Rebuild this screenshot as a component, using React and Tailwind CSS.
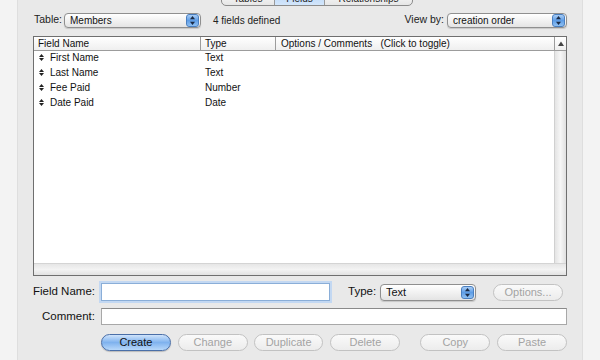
import React from "react";

const font = { fontFamily: '"Liberation Sans", Arial, sans-serif' };

function Arrows() {
  return (
    <div className="w-[13px] h-[13px] rounded-[3px] bg-gradient-to-b from-[#a9cdf5] via-[#5e9de6] to-[#8fc0f2] border border-[#4a7fc0] flex items-center justify-center">
      <svg width="5" height="9" viewBox="0 0 5 9">
        <polygon points="2.5,0 5,3.2 0,3.2" fill="#1a2a44" />
        <polygon points="2.5,9 5,5.8 0,5.8" fill="#1a2a44" />
      </svg>
    </div>
  );
}

function Select({ label, className }) {
  return (
    <div className={"rounded-[4px] border border-[#8f8f8f] bg-gradient-to-b from-[#ffffff] to-[#e4e4e4] flex items-center justify-between pl-[5px] pr-[1px] text-[#111] shadow-[0_1px_1px_rgba(0,0,0,0.15)] " + className}>
      <span>{label}</span>
      <Arrows />
    </div>
  );
}

function Bullet() {
  return (
    <svg width="5" height="7" viewBox="0 0 5 7" className="mr-[6px]">
      <polygon points="2.5,0 5,3 0,3" fill="#222" />
      <polygon points="2.5,7 5,4 0,4" fill="#222" />
    </svg>
  );
}

function Btn({ label, primary, className }) {
  return primary ? (
    <div className={"h-[17px] rounded-full border border-[#4a6fa8] bg-gradient-to-b from-[#cfe3fb] via-[#7fb2ee] to-[#b8d8fa] flex items-center justify-center text-[11px] text-[#111] shadow-[0_1px_1px_rgba(0,0,0,0.2)] " + className}>
      {label}
    </div>
  ) : (
    <div className={"h-[17px] rounded-full border border-[#c2c2c2] bg-gradient-to-b from-[#fafafa] to-[#ececec] flex items-center justify-center text-[11px] text-[#a3a3a3] " + className}>
      {label}
    </div>
  );
}

const rows = [
  ["First Name", "Text"],
  ["Last Name", "Text"],
  ["Fee Paid", "Number"],
  ["Date Paid", "Date"],
];

export default function App() {
  return (
    <div style={font} className="w-[600px] h-[360px] overflow-hidden bg-[#f3f3f3] flex">
      <div className="ml-[17px] w-[566px] h-[360px] bg-[#e9e9e9] border-l border-r border-[#dedede] flex flex-col pl-[15px] pr-[15px]">
        {/* tabs */}
        <div className="h-[16px] mt-[-10px] flex ml-[188px] w-[192px] rounded-[5px] border border-[#8c8c8c] bg-gradient-to-b from-[#ffffff] to-[#e6e6e6] overflow-hidden text-[10px] text-[#222]">
          <div className="w-[53px] flex items-center justify-center border-r border-[#9a9a9a]">Tables</div>
          <div className="w-[50px] flex items-center justify-center bg-gradient-to-b from-[#b5d4f7] to-[#d3e6fb] border-r border-[#9a9a9a]">Fields</div>
          <div className="flex-1 flex items-center justify-center">Relationships</div>
        </div>

        {/* table row */}
        <div className="mt-[6px] h-[16px] flex items-center text-[10px] text-[#222]">
          <span className="ml-[1px] w-[30px] text-[10.5px]">Table:</span>
          <Select label="Members" className="w-[137px] h-[15px] text-[10px]" />
          <span className="ml-[12px]">4 fields defined</span>
          <span className="ml-auto mr-[3px] text-[10.5px]">View by:</span>
          <Select label="creation order" className="w-[120px] h-[15px] text-[10px]" />
        </div>

        {/* table */}
        <div className="mt-[8px] h-[240px] w-[534px] border border-[#6f6f6f] bg-white flex flex-col text-[10px] text-[#111]">
          <div className="h-[14px] flex border-b border-[#9c9c9c] bg-gradient-to-b from-[#ffffff] to-[#efefef] shrink-0">
            <div className="w-[167px] pl-[4px] border-r border-[#9c9c9c] flex items-center">Field Name</div>
            <div className="w-[75px] pl-[4px] border-r border-[#9c9c9c] flex items-center">Type</div>
            <div className="w-[279px] pl-[5px] border-r border-[#9c9c9c] flex items-center whitespace-pre">Options / Comments   (Click to toggle)</div>
            <div className="flex-1 flex items-center justify-center">
              <svg width="6" height="6" viewBox="0 0 6 6"><polygon points="3,0.5 6,5 0,5" fill="#444" /></svg>
            </div>
          </div>
          <div className="flex-1 flex">
            <div className="flex-1 flex flex-col mt-[-1px]">
              {rows.map(([n, t]) => (
                <div key={n} className="h-[15px] flex items-center">
                  <div className="w-[167px] pl-[5px] flex items-center"><Bullet />{n}</div>
                  <div className="pl-[4px]">{t}</div>
                </div>
              ))}
            </div>
            <div className="w-[12px] border-l border-[#d0d0d0] bg-gradient-to-r from-[#e4e4e4] via-[#f6f6f6] to-[#e0e0e0]" />
          </div>
          <div className="h-[12px] shrink-0 border-t border-[#d4d4d4] bg-gradient-to-b from-[#e6e6e6] via-[#f3f3f3] to-[#e2e2e2]" />
        </div>

        {/* field name row */}
        <div className="mt-[7px] h-[18px] flex items-center text-[11.5px] text-[#111]">
          <span className="w-[68px]">Field Name:</span>
          <div className="w-[229px] h-[18px] bg-white border border-[#8aaed8] shadow-[0_0_0_2px_#c3d8f2]" />
          <span className="ml-[18px] w-[32px]">Type:</span>
          <Select label="Text" className="w-[96px] h-[17px] text-[11px]" />
          <Btn label="Options..." className="ml-[17px] w-[70px]" />
        </div>

        {/* comment row */}
        <div className="mt-[7px] h-[17px] flex items-center text-[11.5px] text-[#111]">
          <span className="w-[68px] text-right pr-[6px]">Comment:</span>
          <div className="flex-1 h-[17px] bg-white border border-[#a8a8a8] border-t-[#8a8a8a]" />
        </div>

        {/* buttons */}
        <div className="mt-[9px] flex items-center">
          <Btn primary label="Create" className="ml-[68px] w-[70px]" />
          <Btn label="Change" className="ml-[7px] w-[70px]" />
          <Btn label="Duplicate" className="ml-[6px] w-[70px]" />
          <Btn label="Delete" className="ml-[7px] w-[70px]" />
          <Btn label="Copy" className="ml-[20px] w-[70px]" />
          <Btn label="Paste" className="ml-[7px] w-[70px]" />
        </div>
      </div>
    </div>
  );
}
